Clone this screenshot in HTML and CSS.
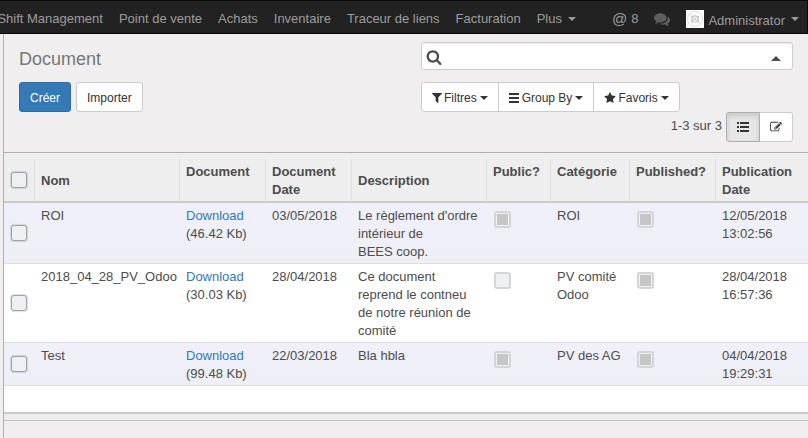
FILE: index.html
```html
<!DOCTYPE html>
<html lang="fr">
<head>
<meta charset="utf-8">
<meta name="viewport" content="width=device-width, initial-scale=1">
<title>Document</title>
<link rel="stylesheet" href="styles.css">
</head>
<body>
<header class="navbar">
  <nav class="menu">
    <a href="#">Shift Management</a>
    <a href="#">Point de vente</a>
    <a href="#">Achats</a>
    <a href="#">Inventaire</a>
    <a href="#">Traceur de liens</a>
    <a href="#">Facturation</a>
    <a href="#">Plus <span class="caret"></span></a>
  </nav>
  <div class="systray">
    <a href="#"><span class="at">@</span> 8</a>
    <a href="#" class="chat" aria-label="Conversations"><svg class="icon-large" viewBox="0 0 1792 1792"><path d="M1408 768q0 139-94 257t-256.500 186.500-353.500 68.500q-86 0-176-16-124 88-278 128-36 9-86 16h-3q-11 0-20.500-8t-11.500-21q-1-3-1-6.500t.5-6.500 2-6l2.500-5 3.500-5.500 4-5 4.500-5 4-4.500q5-6 23-25t26-29.500 22.500-29 25-38.500 20.500-44q-124-72-195-177t-71-224q0-139 94-257t256.500-186.500 353.500-68.500 353.500 68.500 256.500 186.500 94 257zm384 256q0 120-71 224.500t-195 176.500q10 24 20.500 44t25 38.500 22.500 29 26 29.500 23 25q1 1 4 4.500t4.500 5 4 5 3.500 5.500l2.500 5 2 6 .5 6.500-1 6.500q-3 14-13 22t-22 7q-50-7-86-16-154-40-278-128-90 16-176 16-271 0-472-132 58 4 88 4 161 0 309-45t264-129q125-92 192-212t67-254q0-77-23-152 129 71 204 178t75 230z"/></svg></a>
    <a href="#" class="user">
      <svg class="avatar" viewBox="0 0 18 18"><rect width="18" height="18" fill="#fff"/><circle cx="9" cy="9" r="7.500" fill="none" stroke="#ddd"/><path d="M5 6h2l1-1h2l1 1h2v6.500H5z" fill="#ccc"/><circle cx="9" cy="9.200" r="2" fill="#ccc" stroke="#fff"/><path d="M3.700 3.700l10.600 10.600" stroke="#ddd"/></svg>
      <span class="user-name">Administrator</span>
      <span class="caret"></span>
    </a>
  </div>
</header>

<main class="content">
  <section class="control-panel">
    <div class="panel-side">
      <h1>Document</h1>
      <div class="actions">
        <button class="btn primary" type="button">Créer</button>
        <button class="btn" type="button">Importer</button>
      </div>
    </div>
    <div class="panel-side">
      <div class="search">
        <svg class="icon-search" viewBox="0 0 1792 1792"><path d="M1216 832q0-185-131.500-316.500t-316.500-131.500-316.500 131.500-131.500 316.500 131.500 316.500 316.500 131.500 316.500-131.500 131.500-316.500zm512 832q0 52-38 90t-90 38q-54 0-90-38l-343-342q-179 124-399 124-143 0-273.500-55.500t-225-150-150-225-55.500-273.500 55.500-273.500 150-225 225-150 273.500-55.500 273.500 55.500 225 150 150 225 55.500 273.500q0 220-124 399l343 343q37 37 37 90z"/></svg>
        <input type="text" aria-label="Recherche">
        <button class="toggle" type="button" aria-label="Options de recherche"><span class="caret up"></span></button>
      </div>
      <div class="group">
        <button class="btn" type="button"><svg class="icon-filter" viewBox="192 128 1408 1664"><path d="M1595 295q17 41-14 70l-493 493v742q0 42-39 59-13 5-25 5-27 0-45-19l-256-256q-19-19-19-45v-486l-493-493q-31-29-14-70 17-39 59-39h1280q42 0 59 39z"/></svg>Filtres<span class="caret"></span></button>
        <button class="btn" type="button"><svg class="icon-bars" viewBox="0 0 10 12"><path d="M0 1h10v2H0zM0 5h10v2H0zM0 9h10v2H0z"/></svg>Group By<span class="caret"></span></button>
        <button class="btn" type="button"><svg class="icon" viewBox="0 0 1792 1792"><path d="M1728 647q0 22-26 48l-363 354 86 500q1 7 1 20 0 21-10.500 35.500t-30.500 14.500q-19 0-40-12l-449-236-449 236q-22 12-40 12-21 0-31.500-14.500t-10.500-35.500q0-6 2-20l86-500-364-354q-25-27-25-48 0-37 56-46l502-73 225-455q19-41 49-41t49 41l225 455 502 73q56 9 56 46z"/></svg>Favoris<span class="caret"></span></button>
      </div>
      <div class="pager">
        <span>1-3 sur 3</span>
        <div class="group">
          <button class="btn active" type="button" aria-label="Liste"><svg class="icon" viewBox="0 0 12 12"><path d="M3 1h9v2H3zM3 5h9v2H3zM3 9h9v2H3zM0 1h2v2H0zM0 5h2v2H0zM0 9h2v2H0z"/></svg></button>
          <button class="btn" type="button" aria-label="Formulaire"><svg class="icon" viewBox="0 0 1792 1792"><path d="M888 1184l116-116-152-152-116 116v56h96v96h56zm440-720q-16-16-33 1l-350 350q-17 17-1 33t33-1l350-350q17-17 1-33zm80 594v190q0 119-84.500 203.500t-203.500 84.500h-832q-119 0-203.500-84.500t-84.500-203.500v-832q0-119 84.500-203.500t203.500-84.500h832q63 0 117 25 15 7 18 23 3 17-9 29l-49 49q-14 14-32 8-23-6-45-6h-832q-66 0-113 47t-47 113v832q0 66 47 113t113 47h832q66 0 113-47t47-113v-126q0-13 9-22l64-64q15-15 35-7t20 29zm-96-738l288 288-672 672h-288v-288zm444 132l-92 92-288-288 92-92q28-28 68-28t68 28l152 152q28 28 28 68t-28 68z"/></svg></button>
        </div>
      </div>
    </div>
  </section>

  <section class="list">
    <table>
      <colgroup>
        <col class="c-select"><col class="c-name"><col class="c-medium"><col class="c-medium"><col><col class="c-public"><col class="c-category"><col class="c-medium"><col class="c-publication">
      </colgroup>
      <thead>
        <tr>
          <th class="select"><input type="checkbox" aria-label="Tout sélectionner"></th>
          <th>Nom</th>
          <th class="top">Document</th>
          <th>Document Date</th>
          <th>Description</th>
          <th class="top">Public?</th>
          <th class="top">Catégorie</th>
          <th class="top">Published?</th>
          <th>Publication Date</th>
        </tr>
      </thead>
      <tbody>
        <tr>
          <td class="select"><input type="checkbox" aria-label="Sélectionner ROI"></td>
          <td>ROI</td>
          <td><a href="#">Download</a> (46.42 Kb)</td>
          <td>03/05/2018</td>
          <td>Le règlement d'ordre intérieur de<br>BEES coop.</td>
          <td><input type="checkbox" aria-label="Public" checked disabled></td>
          <td>ROI</td>
          <td><input type="checkbox" aria-label="Published" checked disabled></td>
          <td>12/05/2018 13:02:56</td>
        </tr>
        <tr>
          <td class="select"><input type="checkbox" aria-label="Sélectionner 2018_04_28_PV_Odoo"></td>
          <td>2018_04_28_PV_Odoo</td>
          <td><a href="#">Download</a> (30.03 Kb)</td>
          <td>28/04/2018</td>
          <td>Ce document reprend le contneu de notre réunion de comité</td>
          <td><input type="checkbox" aria-label="Public" disabled></td>
          <td>PV comité Odoo</td>
          <td><input type="checkbox" aria-label="Published" checked disabled></td>
          <td>28/04/2018 16:57:36</td>
        </tr>
        <tr>
          <td class="select"><input type="checkbox" aria-label="Sélectionner Test"></td>
          <td>Test</td>
          <td><a href="#">Download</a> (99.48 Kb)</td>
          <td>22/03/2018</td>
          <td>Bla hbla</td>
          <td><input type="checkbox" aria-label="Public" checked disabled></td>
          <td>PV des AG</td>
          <td><input type="checkbox" aria-label="Published" checked disabled></td>
          <td>04/04/2018 19:29:31</td>
        </tr>
      </tbody>
    </table>
    <div class="list-footer"></div>
  </section>
</main>
</body>
</html>
```
FILE: styles.css
```css
* { box-sizing: border-box; }

body {
  display: flex;
  flex-direction: column;
  min-height: 100vh;
  margin: 0;
  background: #f0eeee;
  color: #4c4c4c;
  font: 13px/18px "Liberation Sans", Arial, sans-serif;
}

a { color: #337ab7; text-decoration: none; }
svg { fill: currentColor; flex: none; }

.navbar {
  display: flex;
  justify-content: flex-end;
  height: 34px;
  padding-right: 8px;
  overflow: hidden;
  background: #222;
  border: 1px solid #080808;
  border-left: 0;
}
.navbar a {
  display: flex;
  align-items: center;
  color: #9d9d9d;
  white-space: nowrap;
}
.menu,
.systray { display: flex; gap: 16px; padding-top: 4px; }
.systray { margin-left: 36px; }
.systray a { gap: 4px; }
.menu .caret { margin-left: 6px; }
.at { font-size: 15px; }
.navbar .chat { color: #5f5f5f; }
.icon-large { width: 16px; height: 16px; }
.avatar { width: 18px; height: 18px; }
.user-name { padding-top: 4px; }
.user .caret { margin-left: 2px; }

.caret {
  flex: none;
  border: 4px solid transparent;
  border-top-color: currentColor;
  border-bottom: 0;
}
.caret.up {
  border-width: 0 5px 5px;
  border-bottom: 5px solid currentColor;
}

.content {
  flex: 1;
  margin-left: 3px;
  border-left: 1px solid #afafb6;
}

.control-panel {
  display: grid;
  grid-template-columns: 1fr 1fr;
  border-bottom: 1px solid #afafb6;
}
.panel-side { padding: 8px 15px 10px; }
h1 {
  margin: 0 0 12px;
  color: #777;
  font-size: 18px;
  font-weight: 400;
  line-height: 28px;
  padding-top: 3px;
  height: 28px;
}
.actions { display: flex; gap: 5px; }

.btn {
  display: flex;
  align-items: center;
  gap: 2px;
  height: 30px;
  padding: 1px 10px 0;
  border: 1px solid #ccc;
  border-radius: 3px;
  background: #fff;
  color: #333;
  font: inherit;
  font-size: 12px;
  white-space: nowrap;
}
.btn.primary { background: #337ab7; border-color: #2e6da4; color: #fff; }
.btn.active {
  background: #e6e6e6;
  border-color: #adadad;
  box-shadow: inset 0 3px 5px rgba(0, 0, 0, 0.125);
  z-index: 1;
}
.btn .caret { margin-left: 1px; }
.group { display: flex; }
.group .btn + .btn { margin-left: -1px; border-radius: 0; }
.group .btn:first-child { border-radius: 3px 0 0 3px; }
.group .btn:last-child { border-radius: 0 3px 3px 0; }
.icon { width: 12px; height: 12px; }
.icon-filter { width: 10px; height: 12px; }
.icon-bars { width: 10px; height: 12px; margin-right: 1px; }

.search {
  display: flex;
  align-items: center;
  height: 28px;
  margin-bottom: 12px;
  padding: 0 11px 0 4px;
  border: 1px solid #ccc;
  border-radius: 3px;
  background: #fff;
  box-shadow: inset 0 1px 1px rgba(0, 0, 0, 0.075);
}
.search input { flex: 1; min-width: 0; border: 0; outline: 0; background: none; font: inherit; }
.icon-search { width: 16px; height: 16px; margin-top: 2px; }
.toggle { padding: 4px 0 0; border: 0; background: none; color: #4c4c4c; }
.toggle .caret { display: block; }

.pager { display: flex; justify-content: flex-end; gap: 4px; line-height: 28px; }
.pager .btn { padding: 0 10px; }
.pager .group { margin-top: 0; }

.list { background: #fff; border-top: 6px solid #eee; }
table {
  width: 100%;
  table-layout: fixed;
  border-collapse: separate;
  border-spacing: 0;
}
.c-select { width: 30px; }
.c-name { width: 145px; }
.c-medium { width: 86px; }
.c-public { width: 64px; }
.c-category { width: 79px; }
.c-publication { width: 93px; }

th, td { padding: 4px 6px 2px 7px; text-align: left; vertical-align: top; }
th {
  vertical-align: middle;
  background: #eee;
  border-left: 1px solid #dfdfdf;
  border-bottom: 2px solid #cacaca;
  padding-left: 6px;
  padding-right: 0;
}
th.top { vertical-align: top; }
td { border-bottom: 1px solid #ddd; }
td:nth-child(2) { padding-right: 0; white-space: nowrap; }
tbody tr:nth-child(odd) { background: linear-gradient(#f0f0fa, #eeeef6); }
th.select, td.select { padding: 0; border-left: 0; text-align: center; vertical-align: middle; }

input[type="checkbox"] {
  appearance: none;
  display: block;
  width: 16px;
  height: 16px;
  margin: 0 auto;
  border: 1px solid #9fa3a8;
  border-radius: 3px;
  background: #eff0f1;
  box-shadow: 0 0 1px 1px rgba(0, 0, 0, 0.12);
}
td input[type="checkbox"]:disabled {
  width: 17px;
  height: 17px;
  margin: 4px 0 0 1px;
  border: 2px solid #d3d5d7;
  box-shadow: none;
}
input[type="checkbox"]:disabled:checked {
  background: #c6c6c6;
  box-shadow: inset 0 0 0 1px #eff0f1;
}

.list-footer {
  height: 35px;
  border-bottom: 1px solid #c4c4c4;
  background: linear-gradient(#fff 26px, #cacaca 26px, #cacaca 28px, #eee 28px);
}
```
